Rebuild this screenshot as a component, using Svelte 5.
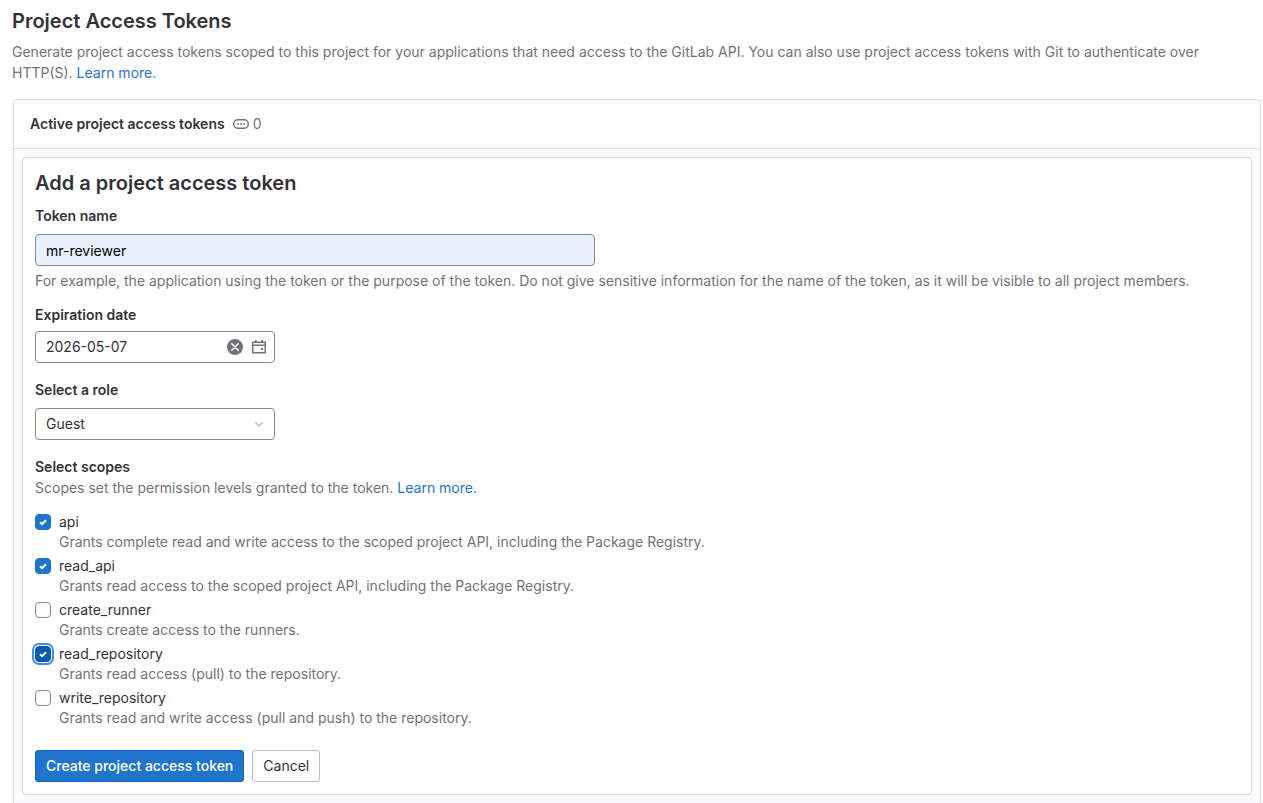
<script>
  let tokenName = $state('mr-reviewer');
  let expires = $state('2026-05-07');
  let role = $state('Guest');
  let scopes = $state([
    { id: 'api', checked: true, help: 'Grants complete read and write access to the scoped project API, including the Package Registry.' },
    { id: 'read_api', checked: true, help: 'Grants read access to the scoped project API, including the Package Registry.' },
    { id: 'create_runner', checked: false, help: 'Grants create access to the runners.' },
    { id: 'read_repository', checked: true, active: true, help: 'Grants read access (pull) to the repository.' },
    { id: 'write_repository', checked: false, help: 'Grants read and write access (pull and push) to the repository.' }
  ]);
</script>

<main class="page">
  <header class="intro">
    <h1>Project Access Tokens</h1>
    <p>
      Generate project access tokens scoped to this project for your applications that need access to the GitLab API. You can also use project access tokens with Git to authenticate over HTTP(S). <a href="#help">Learn more.</a>
    </p>
  </header>

  <section class="card">
    <div class="card-header">
      <h2>Active project access tokens</h2>
      <span class="count">
        <svg width="16" height="16" viewBox="0 0 16 16" aria-hidden="true">
          <rect x="0.75" y="3.75" width="14.5" height="8.5" rx="4" fill="none" stroke="currentColor" stroke-width="1.5" />
          <circle cx="5" cy="8" r="0.9" fill="currentColor" />
          <circle cx="8" cy="8" r="0.9" fill="currentColor" />
          <circle cx="11" cy="8" r="0.9" fill="currentColor" />
        </svg>
        <span>0</span>
      </span>
    </div>

    <div class="card-body">
      <form class="panel" onsubmit={(e) => e.preventDefault()}>
        <h3>Add a project access token</h3>

        <div class="field name">
          <label for="token-name">Token name</label>
          <input id="token-name" class="control filled" type="text" bind:value={tokenName} />
          <p class="hint">For example, the application using the token or the purpose of the token. Do not give sensitive information for the name of the token, as it will be visible to all project members.</p>
        </div>

        <div class="field date">
          <label for="expires">Expiration date</label>
          <div class="control short date-box">
            <input id="expires" type="text" bind:value={expires} />
            <button type="button" class="icon-button" aria-label="Clear date" onclick={() => (expires = '')}>
              <svg width="16" height="16" viewBox="0 0 16 16">
                <circle cx="8" cy="8" r="8" fill="currentColor" />
                <path d="M4.8 4.8l6.4 6.4M11.2 4.8l-6.4 6.4" stroke="#fff" stroke-width="1.6" stroke-linecap="round" />
              </svg>
            </button>
            <button type="button" class="icon-button" aria-label="Open calendar">
              <svg width="16" height="16" viewBox="0 0 16 16" fill="none" stroke="currentColor" stroke-width="1.5">
                <path d="M1.75 3.25h12.5v10.5H1.75zM1.75 6.25h12.5M4.75 1v2.5M11.25 1v2.5" />
                <rect x="10" y="9" width="2" height="2" fill="currentColor" stroke="none" />
              </svg>
            </button>
          </div>
        </div>

        <div class="field role">
          <label for="role">Select a role</label>
          <div class="select-box short">
            <select id="role" class="control" bind:value={role}>
              <option>Guest</option>
              <option>Reporter</option>
              <option>Developer</option>
              <option>Maintainer</option>
            </select>
            <svg class="chevron" width="16" height="16" viewBox="0 0 16 16" aria-hidden="true">
              <path d="M4.75 6.75L8 10l3.25-3.25" fill="none" stroke="currentColor" stroke-width="1.5" stroke-linecap="round" stroke-linejoin="round" />
            </svg>
          </div>
        </div>

        <fieldset>
          <legend>Select scopes</legend>
          <p class="scope-hint">Scopes set the permission levels granted to the token. <a href="#scopes">Learn more.</a></p>
          <div class="scopes">
            {#each scopes as scope}
              <div class="scope">
                <span class="tick">
                  <input type="checkbox" id={scope.id} class:active={scope.active} bind:checked={scope.checked} aria-describedby="{scope.id}-help" />
                  {#if scope.checked}
                    <svg width="16" height="16" viewBox="0 0 16 16" aria-hidden="true">
                      <path d="M5 8.2l2.1 2 3.9-4" fill="none" stroke="#fff" stroke-width="2" />
                    </svg>
                  {/if}
                </span>
                <label for={scope.id}>{scope.id}</label>
                <p id="{scope.id}-help">{scope.help}</p>
              </div>
            {/each}
          </div>
        </fieldset>

        <div class="actions">
          <button type="submit" class="button primary">Create project access token</button>
          <button type="button" class="button">Cancel</button>
        </div>
      </form>
    </div>
  </section>
</main>

<style>
  :global(body) {
    background: #fff;
  }

  .page,
  .page * {
    box-sizing: border-box;
  }

  .page {
    display: flex;
    flex-direction: column;
    min-height: 100vh;
    padding: 9px 2px 0 12px;
    font: 14px/20px Inter, "Liberation Sans", sans-serif;
    color: #333238;
  }

  h1, h2, h3, p {
    margin: 0;
  }

  h1, h3 {
    font-size: 20px;
    line-height: 24px;
    font-weight: 600;
  }

  .intro p {
    margin: 8px 48px 0 0;
    line-height: 21px;
    color: #737278;
  }

  a {
    color: #1f75cb;
    text-decoration: none;
  }

  .card {
    display: flex;
    flex-direction: column;
    flex: 1;
    margin: 16px 0 0 1px;
    border: 1px solid #dcdcde;
    border-bottom: 0;
    border-radius: 4px 4px 0 0;
  }

  .card-header {
    display: flex;
    align-items: center;
    gap: 8px;
    height: 49px;
    padding: 0 16px;
    border-bottom: 1px solid #dcdcde;
  }

  h2 {
    font-size: 14px;
    line-height: 20px;
    font-weight: 600;
  }

  .count {
    display: flex;
    align-items: center;
    gap: 4px;
    color: #737278;
  }

  .card-body {
    flex: 1;
    padding: 8px;
    background: #fbfafd;
  }

  .panel {
    padding: 13px 12px 12px;
    background: #fff;
    border: 1px solid #dcdcde;
    border-radius: 4px;
  }

  .field label,
  legend {
    display: block;
    padding: 0;
    font-weight: 600;
  }

  .field {
    display: flex;
    flex-direction: column;
    align-items: flex-start;
    gap: 8px;
  }

  .name {
    margin-top: 11px;
  }

  .date {
    margin-top: 14px;
    gap: 6px;
  }

  .role {
    margin-top: 17px;
  }

  .control {
    width: 100%;
    height: 32px;
    margin: 0;
    padding: 0 10px;
    font: inherit;
    color: #333238;
    background: #fff;
    border: 1px solid #89888d;
    border-radius: 4px;
    outline: none;
  }

  .filled {
    max-width: 560px;
    color: #000;
    background: #e8f0fe;
  }

  .hint {
    margin-top: -3px;
    color: #737278;
  }

  .short {
    width: 100%;
    max-width: 240px;
  }

  .date-box {
    display: flex;
    align-items: center;
    gap: 8px;
    padding-right: 7px;
  }

  .date-box input {
    flex: 1;
    min-width: 0;
    padding: 0;
    font: inherit;
    color: inherit;
    background: none;
    border: 0;
    outline: none;
  }

  .icon-button {
    display: flex;
    padding: 0;
    color: #737278;
    background: none;
    border: 0;
  }

  .select-box {
    display: grid;
    align-items: center;
  }

  .select-box > * {
    grid-area: 1 / 1;
  }

  select.control {
    appearance: none;
  }

  .chevron {
    justify-self: end;
    margin-right: 8px;
    color: #bfbfc3;
    pointer-events: none;
  }

  fieldset {
    min-width: 0;
    margin: 17px 0 0;
    padding: 0;
    border: 0;
  }

  .scope-hint {
    margin-top: 1px;
    color: #737278;
  }

  .scopes {
    display: grid;
    gap: 4px;
    margin-top: 14px;
  }

  .scope {
    display: grid;
    grid-template-columns: 16px 1fr;
    column-gap: 8px;
    align-items: center;
  }

  .scope p {
    grid-column: 2;
    color: #737278;
  }

  .tick {
    display: grid;
    width: 16px;
    height: 16px;
  }

  .tick > * {
    grid-area: 1 / 1;
  }

  .tick svg {
    pointer-events: none;
  }

  .tick input {
    width: 16px;
    height: 16px;
    margin: 0;
    appearance: none;
    background: #fff;
    border: 1px solid #89888d;
    border-radius: 4px;
  }

  .tick input:checked {
    background: #1f75cb;
    border-color: #1f75cb;
  }

  .tick input.active:checked {
    background: #0b5cad;
    border-color: #0b5cad;
  }

  .tick input.active {
    box-shadow: 0 0 0 1px #fff, 0 0 0 3px #428fdc;
  }

  .actions {
    display: flex;
    gap: 8px;
    margin-top: 22px;
  }

  .button {
    height: 32px;
    padding: 0 11px;
    font: inherit;
    color: #333238;
    background: #fff;
    border: 0;
    border-radius: 4px;
    box-shadow: inset 0 0 0 1px #bfbfc3;
  }

  .primary {
    color: #fff;
    background: #1f75cb;
    box-shadow: inset 0 0 0 1px #1068bf;
    font-weight: 500;
  }
</style>
